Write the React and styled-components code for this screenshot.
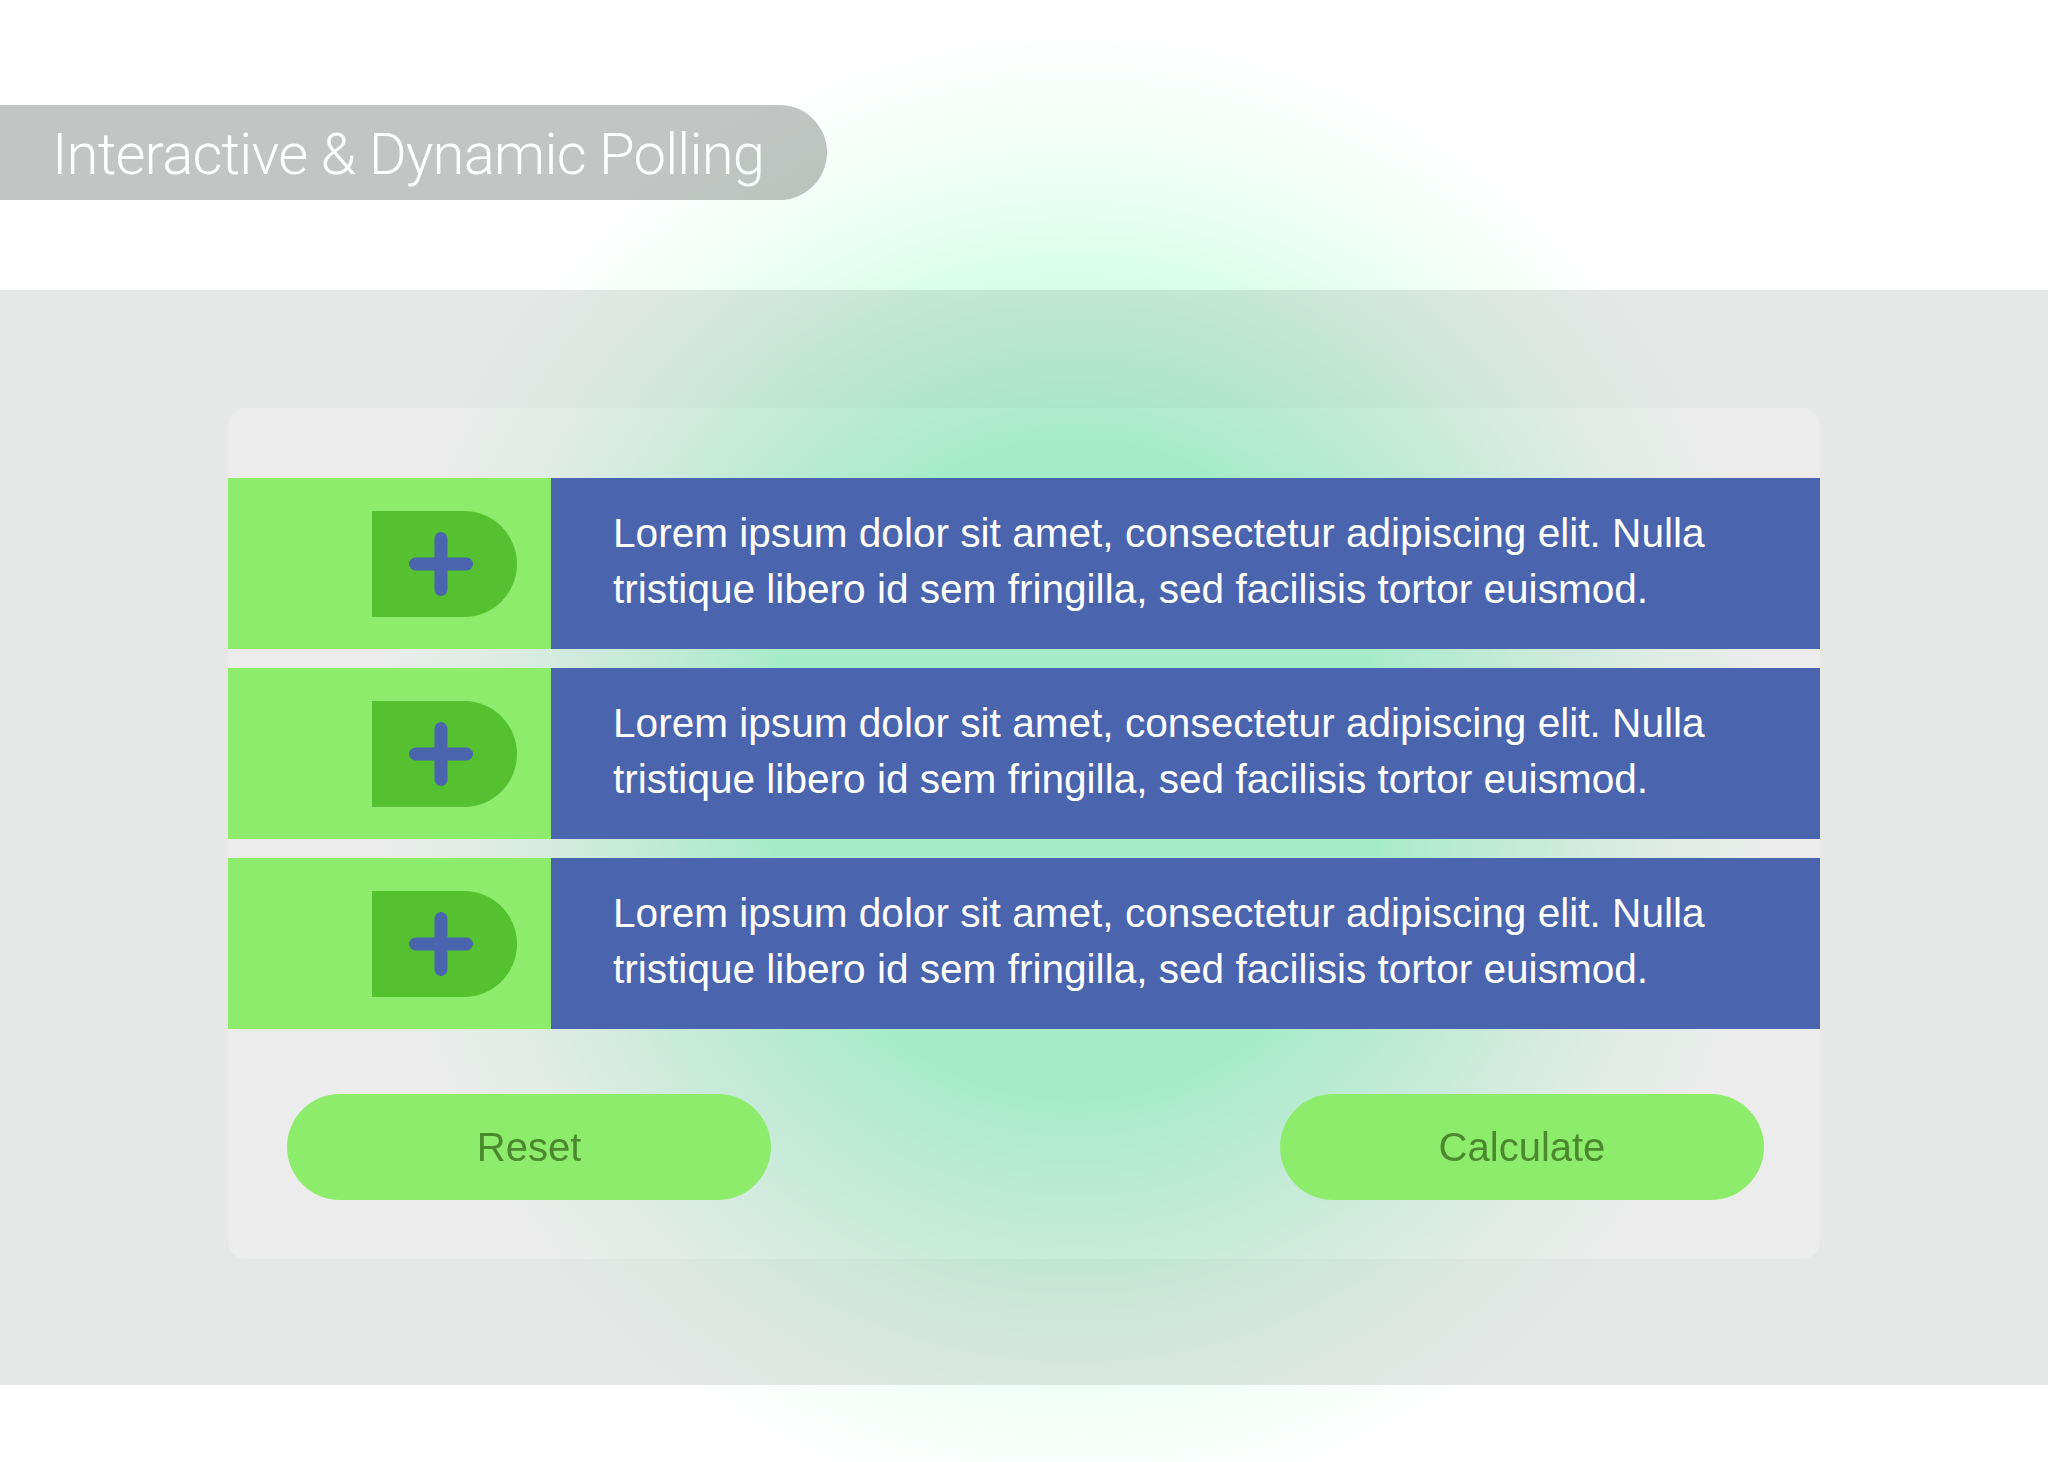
import React from "react";
import styled, { createGlobalStyle } from "styled-components";

const Global = createGlobalStyle`
  html, body { margin: 0; padding: 0; background: #ffffff; }
  body { font-family: "Liberation Sans", Arial, sans-serif; }
`;

const Page = styled.div`
  position: relative;
  isolation: isolate;
  width: 2048px;
  height: 1462px;
  background: #ffffff;
  overflow: hidden;
  display: flex;
  flex-direction: column;
`;

const Glow = styled.div`
  position: absolute;
  inset: 0;
  z-index: 1;
  pointer-events: none;
  mix-blend-mode: multiply;
  background: radial-gradient(
    ellipse 700px 740px at 1075px 770px,
    #b2ffd8 0%,
    #b4ffd9 44%,
    #d2fde8 62%,
    #eefff6 82%,
    #ffffff 100%
  );
`;

const Header = styled.header`
  height: 290px;
  padding-top: 105px;
  box-sizing: border-box;
`;

const TitlePill = styled.div`
  width: 827px;
  height: 95px;
  box-sizing: border-box;
  padding-left: 52px;
  background: #c3c4c4;
  border-radius: 0 48px 48px 0;
  display: flex;
  align-items: center;
`;

const Title = styled.h1`
  margin: 0;
  font-family: "Roboto", "Liberation Sans", sans-serif;
  font-weight: 300;
  font-size: 58px;
  letter-spacing: -0.85px;
  color: #ffffff;
  line-height: 1;
  padding-top: 2px;
`;

const Band = styled.section`
  height: 1095px;
  background: #e6e7e7;
  padding-top: 118px;
  box-sizing: border-box;
  display: flex;
  justify-content: center;
  align-items: flex-start;
`;

const Card = styled.div`
  width: 1592px;
  height: 851px;
  box-sizing: border-box;
  padding: 70px 0 59px;
  background: #ececec;
  border-radius: 18px;
  display: flex;
  flex-direction: column;
`;

const Rows = styled.div`
  position: relative;
  z-index: 2;
  display: flex;
  flex-direction: column;
  gap: 19px;
`;

const Row = styled.div`
  height: 171px;
  display: grid;
  grid-template-columns: 323px 1fr;
`;

const Side = styled.div`
  background: #8eec6c;
  display: flex;
  align-items: center;
  justify-content: flex-end;
  padding-right: 34px;
`;

const AddButton = styled.button`
  width: 145px;
  height: 106px;
  border: none;
  padding: 0;
  margin: 0;
  background: #55c130;
  border-radius: 0 53px 53px 0;
  display: flex;
  align-items: center;
  justify-content: center;
  padding-right: 8px;
  box-sizing: border-box;
  cursor: pointer;
`;

const Body = styled.div`
  background: #4a64ae;
  display: flex;
  align-items: center;
  padding-left: 62px;
`;

const Text = styled.p`
  margin: 0;
  color: #ffffff;
  font-family: "Liberation Sans", Arial, sans-serif;
  font-size: 40.6px;
  line-height: 56px;
  padding-bottom: 6px;
`;

const Actions = styled.div`
  position: relative;
  z-index: 2;
  margin-top: 65px;
  padding: 0 56px 0 59px;
  display: flex;
  justify-content: space-between;
`;

const PillButton = styled.button`
  width: 484px;
  height: 106px;
  border: none;
  border-radius: 53px;
  background: #8eec6c;
  color: #4a8a2d;
  font-family: "Liberation Sans", Arial, sans-serif;
  font-size: 40px;
  cursor: pointer;
  padding: 0;
`;

const Plus = () => (
  <svg width="64" height="64" viewBox="0 0 64 64" aria-hidden="true">
    <path
      d="M32 6.5 V57.5 M6.5 32 H57.5"
      stroke="#4a64ae"
      strokeWidth="13"
      strokeLinecap="round"
      fill="none"
    />
  </svg>
);

const items = [0, 1, 2];

export default function App() {
  return (
    <Page>
      <Global />
      <Glow />
      <Header>
        <TitlePill>
          <Title>Interactive &amp; Dynamic Polling</Title>
        </TitlePill>
      </Header>
      <Band>
        <Card>
          <Rows>
            {items.map((i) => (
              <Row key={i}>
                <Side>
                  <AddButton aria-label="Add">
                    <Plus />
                  </AddButton>
                </Side>
                <Body>
                  <Text>
                    Lorem ipsum dolor sit amet, consectetur adipiscing elit. Nulla
                    <br />
                    tristique libero id sem fringilla, sed facilisis tortor euismod.
                  </Text>
                </Body>
              </Row>
            ))}
          </Rows>
          <Actions>
            <PillButton>Reset</PillButton>
            <PillButton>Calculate</PillButton>
          </Actions>
        </Card>
      </Band>
    </Page>
  );
}
